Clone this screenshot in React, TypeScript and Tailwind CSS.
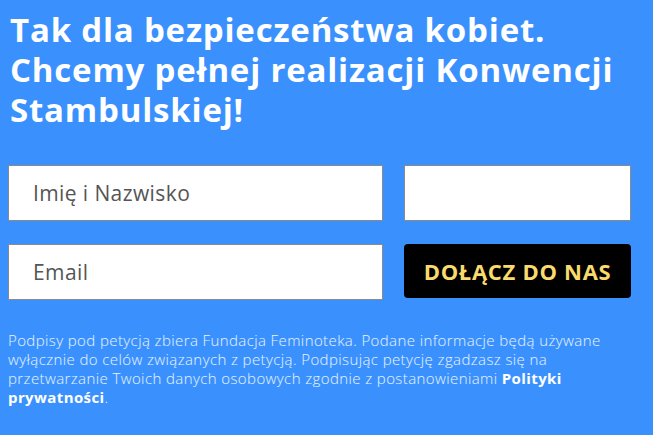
const font = "font-['Open_Sans','Lato',sans-serif]";

export default function App() {
  return (
    <div className={`w-[653px] h-[435px] overflow-hidden bg-[#3a91fe] ${font}`}>
      <h1 className="px-[10px] pt-[10px] text-[33px] leading-[40px] font-bold tracking-[0.8px] text-white">
        Tak dla bezpieczeństwa kobiet.
        <br />
        Chcemy pełnej realizacji Konwencji
        <br />
        Stambulskiej!
      </h1>

      <form className="mt-[35px] ml-[8px] grid grid-cols-[375px_227px] gap-x-[21px] gap-y-[23px]">
        <input
          type="text"
          placeholder="Imię i Nazwisko"
          className="h-[56px] bg-white border border-[#8a8a8a] px-[24px] text-[21px] tracking-[0.4px] text-[#555] placeholder:text-[#555] outline-none"
        />
        <input
          type="text"
          className="h-[56px] bg-white border border-[#8a8a8a] px-[24px] text-[21px] outline-none"
        />
        <input
          type="email"
          placeholder="Email"
          className="h-[56px] bg-white border border-[#8a8a8a] px-[24px] text-[21px] tracking-[0.4px] text-[#555] placeholder:text-[#555] outline-none"
        />
        <button
          type="button"
          className="h-[54px] rounded-[4px] bg-black text-[#f9db6d] text-[22px] font-bold tracking-[0.7px] uppercase"
        >
          Dołącz do nas
        </button>
      </form>

      <p className="mt-[31px] px-[8px] text-[15px] leading-[19px] font-light tracking-[0.4px] text-white/90">
        Podpisy pod petycją zbiera Fundacja Feminoteka. Podane informacje będą używane
        <br />
        wyłącznie do celów związanych z petycją. Podpisując petycję zgadzasz się na
        <br />
        przetwarzanie Twoich danych osobowych zgodnie z postanowieniami{" "}
        <a href="#" className="font-bold text-white">
          Polityki
          <br />
          prywatności
        </a>
        .
      </p>
    </div>
  );
}
